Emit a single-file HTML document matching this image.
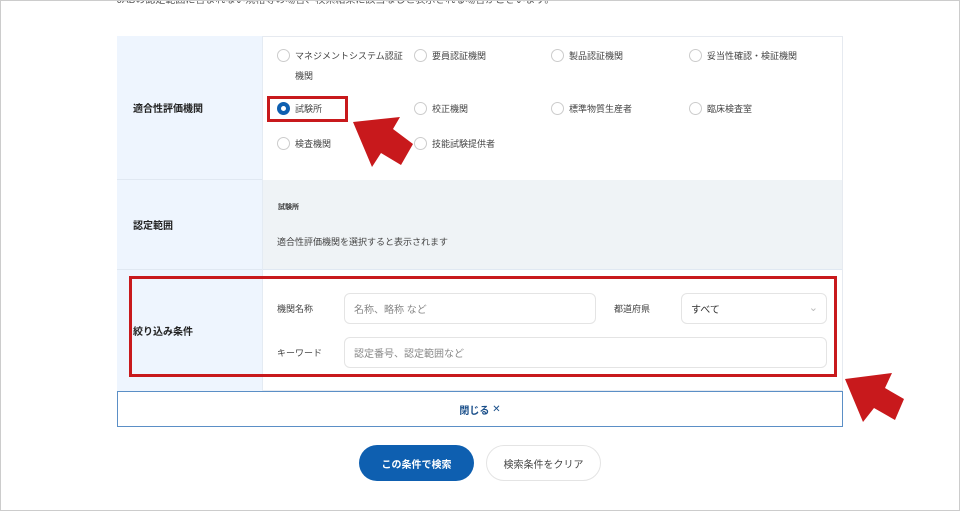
<!DOCTYPE html>
<html><head><meta charset="utf-8"><style>
*{box-sizing:border-box;margin:0;padding:0}
body{width:960px;height:511px;overflow:hidden;background:#fff;font-family:"Liberation Sans","Noto Sans CJK JP",sans-serif;color:#333;position:relative}
.abs{position:absolute}
.top{left:117px;top:-9px;font-size:10px;color:#555;white-space:nowrap}
.tbl{left:117px;top:36px;width:726px;height:355px;border:1px solid #e6eaf0}
.lab{left:117px;width:146px;background:#eef5fe;font-size:10px;font-weight:bold;color:#222;padding-left:16px;display:flex;align-items:center;border-bottom:1px solid #e0e8f2}
.r{font-size:9px;color:#444;white-space:nowrap}
.rd{position:absolute;width:13px;height:13px;border:1px solid #ccc;border-radius:50%;background:#fff}
.inp{border:1px solid #e4e4e4;border-radius:6px;height:31px;font-size:10px;color:#888;padding-left:9px;display:flex;align-items:center;background:#fff}
</style></head><body>
<div class="abs top">JABの認定範囲に含まれない規格等の場合、検索結果に該当なしと表示される場合がございます。</div>
<div class="abs tbl"></div>
<div class="abs lab" style="top:36px;height:144px">適合性評価機関</div>
<div class="abs lab" style="top:180px;height:90px">認定範囲</div>
<div class="abs lab" style="top:270px;height:121px;border-bottom:none">絞り込み条件</div>
<div class="abs" style="left:263px;top:180px;width:579px;height:90px;background:#eff3f6;border-bottom:1px solid #e0e8f2"></div>
<div class="abs" style="left:262px;top:36px;width:1px;height:355px;background:#e4ebf3"></div>
<div class="rd" style="left:277px;top:49px"></div><div class="abs r" style="left:295px;top:49px">マネジメントシステム認証</div><div class="abs r" style="left:295px;top:69px">機関</div>
<div class="rd" style="left:414px;top:49px"></div><div class="abs r" style="left:432px;top:49px">要員認証機関</div>
<div class="rd" style="left:551px;top:49px"></div><div class="abs r" style="left:569px;top:49px">製品認証機関</div>
<div class="rd" style="left:689px;top:49px"></div><div class="abs r" style="left:707px;top:49px">妥当性確認・検証機関</div>
<div class="rd" style="left:277px;top:102px;border:4px solid #0e5fb0"></div><div class="abs r" style="left:295px;top:102px">試験所</div>
<div class="rd" style="left:414px;top:102px"></div><div class="abs r" style="left:432px;top:102px">校正機関</div>
<div class="rd" style="left:551px;top:102px"></div><div class="abs r" style="left:569px;top:102px">標準物質生産者</div>
<div class="rd" style="left:689px;top:102px"></div><div class="abs r" style="left:707px;top:102px">臨床検査室</div>
<div class="rd" style="left:277px;top:137px"></div><div class="abs r" style="left:295px;top:137px">検査機関</div>
<div class="rd" style="left:414px;top:137px"></div><div class="abs r" style="left:432px;top:137px">技能試験提供者</div>
<div class="abs" style="left:267px;top:96px;width:81px;height:26px;border:3px solid #c8191c"></div>
<div class="abs r" style="left:278px;top:202px;font-size:7px;font-weight:bold;color:#333">試験所</div>
<div class="abs r" style="left:277px;top:235px">適合性評価機関を選択すると表示されます</div>
<div class="abs r" style="left:277px;top:302px">機関名称</div>
<div class="abs inp" style="left:344px;top:293px;width:252px">名称、略称 など</div>
<div class="abs r" style="left:614px;top:302px">都道府県</div>
<div class="abs inp" style="left:681px;top:293px;width:146px;color:#333">すべて<span style="position:absolute;right:8px;top:7px;color:#bbb;font-size:11px">&#8964;</span></div>
<div class="abs r" style="left:277px;top:346px">キーワード</div>
<div class="abs inp" style="left:344px;top:337px;width:483px">認定番号、認定範囲など</div>
<div class="abs" style="left:129px;top:276px;width:708px;height:101px;border:3px solid #c8191c"></div>
<div class="abs" style="left:117px;top:391px;width:726px;height:36px;border:1px solid #5b8fc6;font-size:10px;font-weight:bold;color:#1a4f8a;display:flex;align-items:center;justify-content:center;background:#fff">閉じる&nbsp;<span style="font-weight:normal">✕</span></div>
<div class="abs" style="left:359px;top:445px;width:115px;height:36px;border-radius:18px;background:#0e5fb0;color:#fff;font-size:10px;font-weight:bold;display:flex;align-items:center;justify-content:center">この条件で検索</div>
<div class="abs" style="left:486px;top:445px;width:115px;height:36px;border-radius:18px;border:1px solid #e4e4e4;color:#444;font-size:10px;display:flex;align-items:center;justify-content:center">検索条件をクリア</div>
<svg class="abs" style="left:0;top:0" width="960" height="511">
<polygon fill="#c8191c" points="353,122 400,117 393,129 413,144 401,165 381,153 372,167"/>
<polygon fill="#c8191c" points="845,379 892,373 885,388 904,399 895,420 874,408 863,422"/>
</svg>
<div class="abs" style="left:0;top:0;width:960px;height:511px;border:1px solid #ccc;pointer-events:none"></div>
</body></html>
